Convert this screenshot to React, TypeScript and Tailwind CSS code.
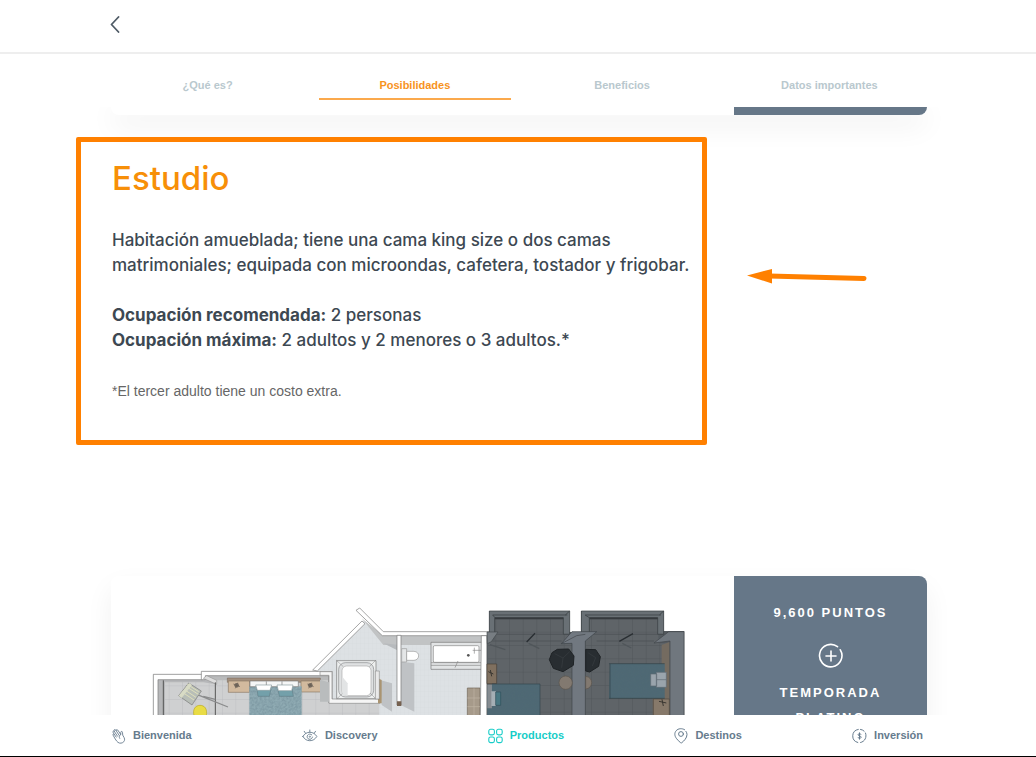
import React from 'react';

const tabs = ['¿Qué es?', 'Posibilidades', 'Beneficios', 'Datos importantes'];

function WaveIcon() {
  return (
    <svg width="14" height="16" viewBox="0 0 14 16" fill="none" stroke="currentColor" strokeWidth="0.900" strokeLinecap="round" strokeLinejoin="round" aria-hidden="true">
      <path d="M3 10.6 1.1 7.2c-.5-1 .7-1.6 1.2-.8L1 4.200c-.5-1 .8-1.700 1.300-.8L2.200 2.600c-.4-1 .8-1.600 1.400-.7l.5.700c-.2-1 1-1.400 1.600-.6l3 4.400.1-2.100c.1-1.200 1.700-1.100 1.700.1l.2 2.700 1.400 2.500c1.100 2.100.3 4-1.400 5-2.200 1.200-4.500.500-5.700-1.100z" />
      <path d="m2.300 6.400 1.900 2.700M2.300 3.400l3.200 4.800M4.100 2.600l3 4.700M8.700 6.400c-1.600 1.200-1.800 2.600-1 4" />
    </svg>
  );
}

function EyeIcon() {
  return (
    <svg width="16" height="16" viewBox="0 0 18 16" fill="none" stroke="currentColor" strokeWidth="1" strokeLinecap="round" aria-hidden="true">
      <path d="M1 8.500C2.800 5.400 5.600 3.800 8.800 3.800s6 1.600 7.900 4.700c-1.900 3.200-4.700 4.800-7.900 4.800S2.800 11.700 1 8.500Z" />
      <path d="M11 6.700a3 3 0 1 0 .8 2.500M9.300 8.200a.7.7 0 1 0 .2.800" />
      <path d="M8.800 1.200v2.500M2.500 2.700 4 5M15.200 2.700 13.700 5" />
    </svg>
  );
}

function GridIcon() {
  return (
    <svg width="15" height="16" viewBox="0 0 15 16" fill="none" stroke="currentColor" strokeWidth="1.100" aria-hidden="true">
      <rect x="0.800" y="1.300" width="5.600" height="5.600" rx="1.800" />
      <rect x="8.600" y="1.300" width="5.600" height="5.600" rx="1.800" />
      <rect x="0.800" y="9" width="5.600" height="5.600" rx="1.800" />
      <rect x="8.600" y="9" width="5.600" height="5.600" rx="1.800" />
    </svg>
  );
}

function PinIcon() {
  return (
    <svg width="14" height="16" viewBox="0 0 14 16" fill="none" stroke="currentColor" strokeWidth="1" strokeLinecap="round" aria-hidden="true">
      <path d="M10.600 1.700C8 .1 4.300.3 2.200 2.700c-2 2.300-1.600 5.200.1 7.600 1.200 1.700 2.700 3.100 4.300 4.400.4.300.8.300 1.200 0 2.200-1.800 5.200-4.700 5.200-8.200 0-1.200-.4-2.300-1.100-3.200" />
      <circle cx="7" cy="6" r="2.400" />
    </svg>
  );
}

function CoinIcon() {
  return (
    <svg width="15" height="16" viewBox="0 0 15 16" fill="none" stroke="currentColor" strokeWidth="1" strokeLinecap="round" aria-hidden="true">
      <path d="M5.800 14.500A6.700 6.700 0 0 1 6.300 1.400M8.500 1.400c1.400.2 2.600.8 3.600 1.700M13.500 5c1.600 4.100-.6 8.600-4.900 9.500" />
      <path d="M9 6.500c-.3-.6-.9-.8-1.500-.8-.9 0-1.400.4-1.400 1 0 1.600 3 .8 3 2.500 0 .7-.6 1.100-1.500 1.100-.7 0-1.300-.3-1.600-.9M7.500 4.800v6.400" />
    </svg>
  );
}

const sections = [
  { label: 'Bienvenida', Icon: WaveIcon },
  { label: 'Discovery', Icon: EyeIcon },
  { label: 'Productos', Icon: GridIcon, active: true },
  { label: 'Destinos', Icon: PinIcon },
  { label: 'Inversión', Icon: CoinIcon },
];

function FloorPlan() {
  return (
    <svg viewBox="111 576 623 139" className="block w-full" role="img" aria-label="Plano del estudio">
      <defs>
        <pattern id="tile" width="40" height="41" patternUnits="userSpaceOnUse" x="6" y="25">
          <rect width="40" height="41" fill="#cfd0d1" />
          <path d="M0 0H40M0 0V41" stroke="#b4b6b8" strokeWidth="2" />
        </pattern>
        <pattern id="plank" width="12" height="16" patternUnits="userSpaceOnUse">
          <rect width="12" height="16" fill="#dde1e4" />
          <path d="M0 0H12M0 0V16" stroke="#d1d6da" strokeWidth="1" />
        </pattern>
        <pattern id="darkTile" width="41" height="40" patternUnits="userSpaceOnUse" x="5" y="30">
          <rect width="41" height="40" fill="#5f6468" />
          <path d="M0 0H41M0 0V40" stroke="#4b5054" strokeWidth="2" />
        </pattern>
        <filter id="fabric" x="0" y="0" width="1" height="1" colorInterpolationFilters="sRGB">
          <feTurbulence type="fractalNoise" baseFrequency="0.15" numOctaves="2" />
          <feColorMatrix values="0 0 0 0 .3  0 0 0 0 .4  0 0 0 0 .46  .5 0 0 0 -.15" />
          <feComposite in2="SourceGraphic" operator="in" result="n" />
          <feMerge>
            <feMergeNode in="SourceGraphic" />
            <feMergeNode in="n" />
          </feMerge>
        </filter>
      </defs>

      {/* bedroom and terrace */}
      <g transform="translate(140 595) scale(0.33333)" strokeLinejoin="round">
        <path d="M40 238H188V228H578V312H725V370H40Z" fill="url(#tile)" />
        <path d="M53 255H190V250H228V268L190 262H75V370H53Z" fill="#b6b7b9" />
        <path d="M200 240H572V256H215Z" fill="#b9babb" />
        <path d="M40 238H188V254H54V370H40Z" fill="#fff" stroke="#777" strokeWidth="2" />
        <path d="M184 229H578V312H640V322H566V242H196V254H184Z" fill="#fff" stroke="#777" strokeWidth="2" />
        <path d="M190 250 230 268V256L200 242Z" fill="#ddd" stroke="#888" strokeWidth="1.500" />
        <path d="M226 262V370M70 256V370" stroke="#555" strokeWidth="3" />
        <path d="M172 299 264 336M190 304 226 313" stroke="#8b8c8d" strokeWidth="4" />
        <path d="M146 264 184 288 156 330 116 302Z" fill="#b8beb7" stroke="#777" strokeWidth="2" />
        <path d="m139 275 36 23M132 283l36 24M126 291l36 24M142 268l34 22" stroke="#dfdfbb" strokeWidth="3" />
        <path d="M148 264 156 270 125 309 116 302Z" fill="#d8dbc5" />
        <path d="M162 362c-5-20 5-31 18-31s23 10 19 31Z" fill="#e9dc45" stroke="#b8a928" strokeWidth="2" />
        <path d="M262 249H541V262H262Z" fill="#a38f7d" stroke="#6f6256" strokeWidth="1.500" />
        <path d="M265 258H329V292H265ZM483 258H542V291H483Z" fill="#d2ba9e" stroke="#8b7865" strokeWidth="2" />
        <circle cx="290" cy="271" r="7" fill="#776d62" />
        <circle cx="511" cy="271" r="7" fill="#776d62" />
        <path d="m280 267 20 8m-7-12-7 17m216-13 19 8m-6-12-9 17" stroke="#665c52" strokeWidth="2" />
        <path d="M328 274H485V370H328Z" fill="#8fabb3" filter="url(#fabric)" />
        <path d="M330 258H475V275H330Z" fill="#f5f6f6" stroke="#777" strokeWidth="2" />
        <path d="M379 259V275M426 259V275" stroke="#777" strokeWidth="2" />
        <path d="M351 282H393L388 304H354ZM414 282H456L460 304H418Z" fill="#73a0aa" stroke="#64808a" strokeWidth="2" />
        <path d="M347 270H395L390 286H352ZM411 270H459L455 287H415Z" fill="#fff" stroke="#8b9b9f" strokeWidth="2" />
      </g>

      {/* bathroom and entrance */}
      <g transform="translate(320 595) scale(0.33333)" strokeLinejoin="round">
        <path d="M-15 228 130 78 190 135H490V370H178V325H38V228Z" fill="url(#plank)" />
        <path d="M125 70 190 122H490V150H190Z" fill="#c1c3c4" />
        <path d="M242 200 283 205V350L242 330ZM180 255 216 265V350L185 330Z" fill="#bfc2c5" />
        <path d="M190 145 232 149V166Z" fill="#b7babd" />
        <path d="M-22 225 126 78 135 86-8 228Z" fill="#fff" stroke="#777" strokeWidth="2" />
        <path d="M108 46 119 39 190 110H535V122H187Z" fill="#fff" stroke="#777" strokeWidth="2" />
        <path d="M0 230H36V312H180V325H27V241H0Z" fill="#f5f5f5" stroke="#888" strokeWidth="2" />
        <path d="M0 254 27 262V320H0Z" fill="#b9bcbd" />
        <path d="M50 197H168V311H50Z" fill="#eef0f0" stroke="#777" strokeWidth="2" />
        <rect x="56" y="203" width="105" height="103" rx="20" fill="#dfe1e2" stroke="#858789" strokeWidth="2" />
        <rect x="66" y="213" width="87" height="89" rx="14" fill="#fff" stroke="#aaa" strokeWidth="2" />
        <path d="m48 195 22 20M168 195l-20 20M50 312l19-18M168 312l-18-18" stroke="#888" strokeWidth="1.500" />
        <path d="M67 245 83 265V302H67Z" fill="#e2e4e5" />
        <path d="M174 250 185 255V325H174Z" fill="#aa9471" />
        <path d="M166 228H178V312H166Z" fill="#e9e9e9" stroke="#777" strokeWidth="1.500" />
        <path d="M231 121H243V330H231Z" fill="#fff" stroke="#777" strokeWidth="2" />
        <path d="M231 319H244V333H231Z" fill="#756150" />
        <path d="M245 161H260V201H245Z" fill="#e4e6e7" stroke="#999" strokeWidth="2" />
        <path d="M260 169h22c19 1 18 26 0 27h-22Z" fill="#fff" stroke="#999" strokeWidth="2" />
        <path d="M333 142H487V223H333Z" fill="#e2e4e5" stroke="#777" strokeWidth="2" />
        <rect x="340" y="152" width="137" height="50" rx="4" fill="#fff" stroke="#888" strokeWidth="2" />
        <path d="M333 203H487M333 211H482M405 218l9-20M458 166h30M463 158v18" stroke="#888" strokeWidth="2" />
        <circle cx="445" cy="181" r="4" fill="#555" />
        <path d="M442 279H480V370H442Z" fill="#a69a8a" stroke="#706557" strokeWidth="2" />
        <path d="M442 309H480M442 335H480M462 280V365" stroke="#c0b5a4" strokeWidth="2" />
        <path d="M484 122H500V370H481Z" fill="#fff" stroke="#777" strokeWidth="2" />
      </g>

      {/* adjoining suites, shaded */}
      <g transform="translate(480 595) scale(0.33333)" strokeLinejoin="round">
        <path d="M28 48H269V110H303V48H551V108H613V370H21V112H28Z" fill="#555b60" />
        <path d="M269 46H303V110H269Z" fill="#fff" />
        <path d="M45 70H252V115H288V370H24V134H45ZM328 70H535V145H566V370H317V112H328Z" fill="url(#darkTile)" />
        <path d="M28 48H269V118H250V68H44V114H28ZM304 48H551V118H533V68H328V114H304Z" fill="#697075" stroke="#373c40" strokeWidth="2" />
        <path d="M38 60 45 68M256 60l13-12M315 60l13 8M538 60l13-12M38 60H262M316 60H543" stroke="#34393d" strokeWidth="2" />
        <path d="M45 70H250M329 70H533" stroke="#363a3e" strokeWidth="5" />
        <path d="M28 118H548M28 138H245M350 138H522" stroke="#4a4f53" strokeWidth="2" />
        <path d="M21 111H54L34 140 22 146Z" fill="#777d82" stroke="#43484c" strokeWidth="2" />
        <path d="M276 110H350L316 138V370H276V145L244 146Z" fill="#717880" stroke="#3e4449" strokeWidth="2" />
        <path d="M566 110H612V370H570V138L522 144Z" fill="#70777e" stroke="#41464a" strokeWidth="2" />
        <path d="M244 146 290 122 316 118" fill="none" stroke="#41464a" strokeWidth="2" />
        <path d="M140 141 165 115M418 139 459 116" stroke="#292e32" strokeWidth="4" />
        <path d="m146 145 32 16m249-16 27 14M30 149l46 15" stroke="#50565a" strokeWidth="4" />
        <path d="M21 207H50V266H21Z" fill="#80705f" stroke="#484037" strokeWidth="2" />
        <path d="m25 230 15 7m-9-12 4 19" stroke="#393631" strokeWidth="3" />
        <path d="M36 267H180V370H22V285H36Z" fill="#4f6974" filter="url(#fabric)" />
        <path d="M22 269H36V340H22Z" fill="#858b90" />
        <path d="M34 289H48V333H34Z" fill="#a5afb5" />
        <path d="M47 291H62V331H47Z" fill="#497782" stroke="#32505a" strokeWidth="2" />
        <path d="M36 267H180V370" fill="none" stroke="#33454d" strokeWidth="2" />
        <path d="M208 194 216 173 232 163 266 162 282 183 280 211 249 230 220 220Z" fill="#282d31" stroke="#1e2225" strokeWidth="3" />
        <path d="M317 163 347 164 361 185 356 214 329 231 317 228Z" fill="#282d31" stroke="#1e2225" strokeWidth="3" />
        <path d="m224 176 25 13 20-19M249 189l-4 29M325 174l22 14-10 25" fill="none" stroke="#33383c" strokeWidth="3" />
        <circle cx="257" cy="263" r="20" fill="#827970" stroke="#5b544d" strokeWidth="2" />
        <path d="M317 244c24 2 24 36 0 38Z" fill="#827970" stroke="#5b544d" strokeWidth="2" />
        <path d="M545 150 568 141V370H518V310H545Z" fill="#746b60" />
        <path d="M520 312H568V370H520Z" fill="#87796a" stroke="#4e4740" strokeWidth="2" />
        <path d="m537 319 22 5m-13-11 4 20" stroke="#393631" strokeWidth="3" />
        <path d="M390 207H554V309H387Z" fill="#4f6974" filter="url(#fabric)" />
        <path d="M387 206H554M387 310H554M390 207V310" stroke="#2e4149" strokeWidth="2" />
        <path d="M529 232H559V277H529ZM512 237H530V273H512Z" fill="#9aa4ac" stroke="#5f6a72" strokeWidth="2" />
        <path d="M530 254H559" stroke="#5f6a72" strokeWidth="2" />
      </g>
    </svg>
  );
}

export default function App() {
  return (
    <div className="flex h-screen flex-col overflow-hidden border-b border-black bg-white font-['Liberation_Sans',Arial,sans-serif] text-[#3d4852]">
      <header className="flex h-[54px] shrink-0 items-center border-b-2 border-[#eeeeee] px-[108px]">
        <button type="button" aria-label="Regresar" className="p-0 text-[#4f5b66]">
          <svg width="14" height="20" viewBox="0 0 14 20" fill="none" stroke="currentColor" strokeWidth="1.800" strokeLinecap="round" strokeLinejoin="round" className="block">
            <path d="M10.500 1 3.500 8.500 10.500 16" />
          </svg>
        </button>
      </header>

      <nav aria-label="Secciones del producto" className="grid h-[53px] shrink-0 grid-cols-4 pr-[103px] pl-[104px] text-[11px] font-bold">
        {tabs.map((tab) => (
          <a
            key={tab}
            href="#"
            className={
              tab === 'Posibilidades'
                ? 'mx-2 mb-[7px] flex items-end justify-center border-b-2 border-[#fba94c] pb-[7px] leading-3 text-[#f7931e]'
                : 'mx-2 mb-[7px] flex items-end justify-center border-b-2 border-transparent pb-[7px] leading-3 text-[#b9c8ce]'
            }
          >
            {tab}
          </a>
        ))}
      </nav>

      <main className="min-h-0 flex-1 overflow-hidden">
        <div className="mr-[109px] ml-[111px] flex h-2 justify-end rounded-b-lg shadow-[0_8px_28px_rgba(0,0,0,0.12)]">
          <div className="w-[193px] rounded-br-lg bg-[#667788]" />
        </div>

        <div className="mt-[22px] ml-[76px] flex items-start">
          <section className="h-[308px] w-[631px] shrink-0 rounded-xs border-5 border-[#ff8000] pt-[11px] pl-[31px]">
            <h1 className="font-['Inter',sans-serif] text-[33px] leading-[50px] font-medium text-[#f78f08]">Estudio</h1>
            <div className="mt-[25px] font-['Inter',sans-serif] text-[17px] leading-[25px] font-medium whitespace-nowrap">
              <p>
                Habitación amueblada; tiene una cama king size o dos camas
                <br />
                matrimoniales; equipada con microondas, cafetera, tostador y frigobar.
              </p>
              <p className="mt-[25px]">
                <strong className="font-bold">Ocupación recomendada:</strong> 2 personas
                <br />
                <strong className="font-bold">Ocupación máxima:</strong> 2 adultos y 2 menores o 3 adultos.*
              </p>
            </div>
            <p className="mt-[26px] text-sm leading-[25px] text-[#666666]">*El tercer adulto tiene un costo extra.</p>
          </section>
          <svg width="122" height="20" viewBox="0 0 122 20" className="mt-[130px] ml-[39px] shrink-0" aria-hidden="true">
            <path d="M23 9 118 11.500" stroke="#ff8000" strokeWidth="5" strokeLinecap="round" />
            <path d="M1 8.500 26 2V16.500Z" fill="#ff8000" />
          </svg>
        </div>

        <article className="mt-[131px] mr-[109px] ml-[111px] flex h-[300px] overflow-hidden rounded-lg shadow-[0_12px_28px_rgba(0,0,0,0.06)]">
          <div className="min-w-0 flex-1">
            <FloorPlan />
          </div>
          <div className="flex w-[193px] shrink-0 flex-col items-center bg-[#667788] pt-6 text-[13px] leading-[25px] font-bold tracking-[2px] text-white">
            <p>9,600 PUNTOS</p>
            <svg width="26" height="26" viewBox="0 0 26 26" fill="none" stroke="currentColor" strokeWidth="1.600" strokeLinecap="round" className="mt-[18px]" aria-hidden="true">
              <path d="M19.500 3.700A11.200 11.200 0 1 0 22.300 6.800M13 8V18M8 13H18" />
            </svg>
            <p className="mt-[11px] text-center">
              TEMPORADA
              <br />
              PLATINO
            </p>
          </div>
        </article>
      </main>

      <nav aria-label="Navegación principal" className="flex h-[41px] shrink-0 items-center justify-between bg-white pr-[113px] pl-[112px] text-[11px] font-bold text-[#667b8d]">
        {sections.map(({ label, Icon, active }) => (
          <a key={label} href="#" className={active ? 'flex items-center gap-[7px] text-[#17cdc8]' : 'flex items-center gap-[7px]'}>
            <Icon />
            {label}
          </a>
        ))}
      </nav>
    </div>
  );
}
